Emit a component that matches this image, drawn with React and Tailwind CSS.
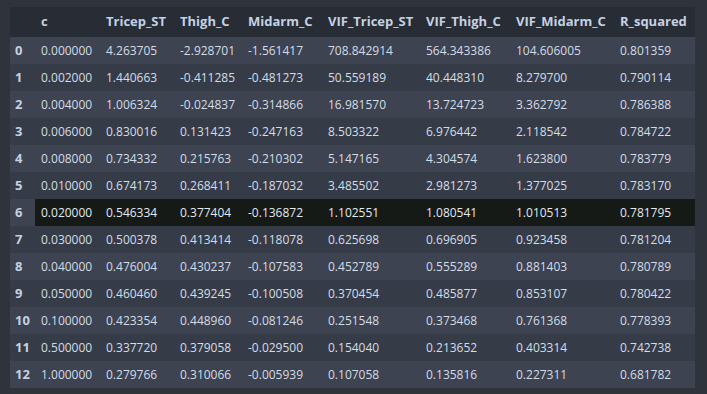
import React from "react";

const columns = ["c", "Tricep_ST", "Thigh_C", "Midarm_C", "VIF_Tricep_ST", "VIF_Thigh_C", "VIF_Midarm_C", "R_squared"]

const rows = [
  ["0.000000", "4.263705", "-2.928701", "-1.561417", "708.842914", "564.343386", "104.606005", "0.801359"],
  ["0.002000", "1.440663", "-0.411285", "-0.481273", "50.559189", "40.448310", "8.279700", "0.790114"],
  ["0.004000", "1.006324", "-0.024837", "-0.314866", "16.981570", "13.724723", "3.362792", "0.786388"],
  ["0.006000", "0.830016", "0.131423", "-0.247163", "8.503322", "6.976442", "2.118542", "0.784722"],
  ["0.008000", "0.734332", "0.215763", "-0.210302", "5.147165", "4.304574", "1.623800", "0.783779"],
  ["0.010000", "0.674173", "0.268411", "-0.187032", "3.485502", "2.981273", "1.377025", "0.783170"],
  ["0.020000", "0.546334", "0.377404", "-0.136872", "1.102551", "1.080541", "1.010513", "0.781795"],
  ["0.030000", "0.500378", "0.413414", "-0.118078", "0.625698", "0.696905", "0.923458", "0.781204"],
  ["0.040000", "0.476004", "0.430237", "-0.107583", "0.452789", "0.555289", "0.881403", "0.780789"],
  ["0.050000", "0.460460", "0.439245", "-0.100508", "0.370454", "0.485877", "0.853107", "0.780422"],
  ["0.100000", "0.423354", "0.448960", "-0.081246", "0.251548", "0.373468", "0.761368", "0.778393"],
  ["0.500000", "0.337720", "0.379058", "-0.029500", "0.154040", "0.213652", "0.403314", "0.742738"],
  ["1.000000", "0.279766", "0.310066", "-0.005939", "0.107058", "0.135816", "0.227311", "0.681782"],
]

const gridCols = "grid grid-cols-[25px_65px_74px_68px_80px_98px_90px_104px_81px]"

const App = () => {
  return (
    <div className="w-[707px] h-[394px] bg-[#2e333c] pt-[7px] pl-[10px] font-['Open_Sans',sans-serif] text-[12px] text-[#d4dce7]">
      <div className="w-[685px]">
        {/* header */}
        <div className={`${gridCols} h-[30px] items-center bg-[#272c35] font-bold text-[13px] text-[#c5d1e3]`}>
          <div></div>
          {columns.map(col => (
            <div key={col} className="pl-[6px] whitespace-nowrap">{col}</div>
          ))}
        </div>

        {rows.map((row, i) => {
          const hover = i === 6
          return (
            <div
              key={i}
              className={`${gridCols} h-[27px] items-center ${i % 2 === 0 ? "bg-[#3d4350]" : "bg-[#363c47]"}`}
            >
              <div className="pl-[5px] font-bold text-[13px] text-[#c5d1e3]">{i}</div>
              {row.map((val, j) => (
                <div
                  key={j}
                  className={`h-full flex items-center pl-[6px] whitespace-nowrap ${hover ? "bg-[#151a17] text-[#e2e9f0]" : ""}`}
                >
                  {val}
                </div>
              ))}
            </div>
          )
        })}
      </div>
    </div>
  )
}

export default App
